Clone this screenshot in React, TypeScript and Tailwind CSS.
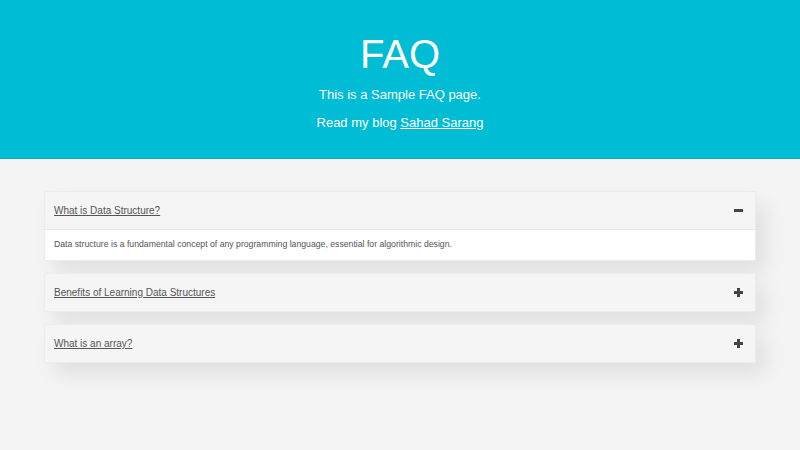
import { useState } from "react";

const faqs = [
  {
    q: "What is Data Structure?",
    a: "Data structure is a fundamental concept of any programming language, essential for algorithmic design.",
  },
  {
    q: "Benefits of Learning Data Structures",
    a: "Learning data structures helps you write efficient programs and solve problems faster.",
  },
  {
    q: "What is an array?",
    a: "An array is a collection of items stored at contiguous memory locations.",
  },
];

export default function App() {
  const [open, setOpen] = useState(0);

  return (
    <div className="min-h-[450px] bg-[#f4f4f4] font-['Liberation_Sans',Arial,sans-serif]">
      {/* Header */}
      <header className="h-[159px] bg-[#00bcd4] border-b border-[#0aa9bd] text-center text-white pt-[30px]">
        <h1 className="text-[40px] leading-[48px]">FAQ</h1>
        <p className="mt-[8px] text-[13px] leading-[18px]">This is a Sample FAQ page.</p>
        <p className="mt-[10px] text-[13px] leading-[18px]">
          Read my blog{" "}
          <a href="#" className="underline">
            Sahad Sarang
          </a>
        </p>
      </header>

      {/* Accordion */}
      <div className="mx-[44px] pt-[32px] flex flex-col gap-[12px]">
        {faqs.map((item, i) => {
          const isOpen = open === i;
          return (
            <div
              key={i}
              className="bg-white border border-[#ececec] rounded-[2px] shadow-[10px_12px_20px_rgba(0,0,0,0.08)]"
            >
              <button
                onClick={() => setOpen(isOpen ? -1 : i)}
                className="w-full h-[37px] flex items-center justify-between bg-[#f5f5f5] pl-[9px] pr-[12px] text-left cursor-pointer"
              >
                <span className="text-[10px] text-[#555] underline">{item.q}</span>
                <span className="relative w-[9px] h-[9px]">
                  <span className="absolute left-0 top-[3px] w-[9px] h-[3px] bg-[#444]" />
                  {!isOpen && (
                    <span className="absolute left-[3px] top-0 w-[3px] h-[9px] bg-[#444]" />
                  )}
                </span>
              </button>
              {isOpen && (
                <div className="border-t border-[#e6e6e6] h-[31px] flex items-center pl-[9px] text-[8.7px] text-[#555]">
                  {item.a}
                </div>
              )}
            </div>
          );
        })}
      </div>
    </div>
  );
}
